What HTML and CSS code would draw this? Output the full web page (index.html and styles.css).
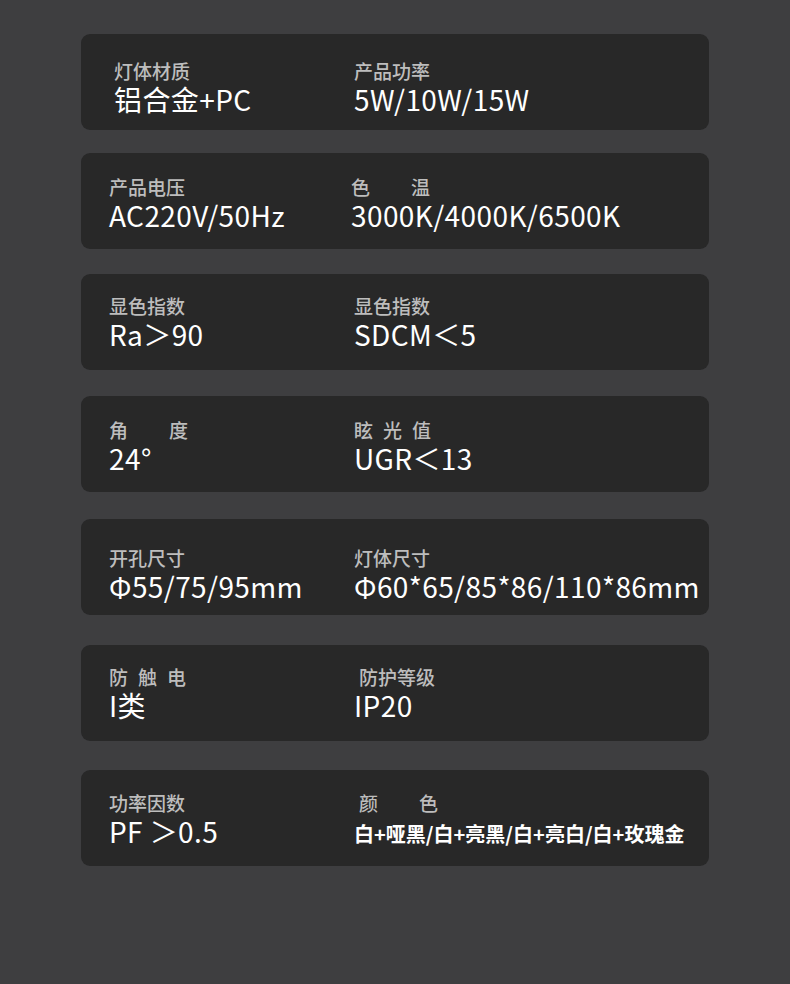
FILE: index.html
```html
<!DOCTYPE html>
<html lang="zh-CN">
<head>
  <meta charset="UTF-8">
  <meta name="viewport" content="width=device-width, initial-scale=1.0">
  <title>产品参数</title>
  <link rel="stylesheet" href="styles.css">
</head>
<body>
  <div class="specs">
    <div class="card">
      <div class="cell">
        <div class="label">灯体材质</div>
        <div class="value">铝合金+PC</div>
      </div>
      <div class="cell">
        <div class="label">产品功率</div>
        <div class="value">5W/10W/15W</div>
      </div>
    </div>

    <div class="card">
      <div class="cell">
        <div class="label">产品电压</div>
        <div class="value">AC220V/50Hz</div>
      </div>
      <div class="cell">
        <div class="label wide">色温</div>
        <div class="value">3000K/4000K/6500K</div>
      </div>
    </div>

    <div class="card">
      <div class="cell">
        <div class="label">显色指数</div>
        <div class="value">Ra＞90</div>
      </div>
      <div class="cell">
        <div class="label">显色指数</div>
        <div class="value">SDCM＜5</div>
      </div>
    </div>

    <div class="card">
      <div class="cell">
        <div class="label wide">角度</div>
        <div class="value">24°</div>
      </div>
      <div class="cell">
        <div class="label spaced">眩光值</div>
        <div class="value">UGR＜13</div>
      </div>
    </div>

    <div class="card">
      <div class="cell">
        <div class="label">开孔尺寸</div>
        <div class="value">Φ55/75/95mm</div>
      </div>
      <div class="cell">
        <div class="label">灯体尺寸</div>
        <div class="value">Φ60*65/85*86/110*86mm</div>
      </div>
    </div>

    <div class="card">
      <div class="cell">
        <div class="label spaced">防触电</div>
        <div class="value">I类</div>
      </div>
      <div class="cell">
        <div class="label">防护等级</div>
        <div class="value">IP20</div>
      </div>
    </div>

    <div class="card">
      <div class="cell">
        <div class="label">功率因数</div>
        <div class="value">PF ＞0.5</div>
      </div>
      <div class="cell">
        <div class="label wide">颜色</div>
        <div class="value small">白+哑黑/白+亮黑/白+亮白/白+玫瑰金</div>
      </div>
    </div>
  </div>
</body>
</html>
```

FILE: styles.css
```css
body {
  margin: 0;
  min-height: 984px;
  background-color: #3e3e40;
  font-family: "Noto Sans CJK SC", "Noto Sans", sans-serif;
  color: #ffffff;
}
.specs {
  width: 628px;
  margin: 0 auto;
  padding-top: 34px;
}
.card {
  display: grid;
  grid-template-columns: 270px 1fr;
  height: 96px;
  box-sizing: border-box;
  padding-top: 23px;
  margin-bottom: 26px;
  background-color: #282828;
  border-radius: 9px;
}
.cell:first-child {
  padding-left: 28px;
}
.cell:last-child {
  padding-left: 3px;
}
.label {
  font-size: 19px;
  line-height: 22px;
  font-weight: 500;
  color: #bdbdbd;
  white-space: nowrap;
}
.label.wide {
  letter-spacing: 41px;
}
.label.spaced {
  letter-spacing: 10px;
}
.value {
  margin-top: 1px;
  font-size: 28px;
  line-height: 32px;
  letter-spacing: 0.4px;
  white-space: nowrap;
}
.value.small {
  margin-top: 4px;
  font-size: 20px;
  font-weight: 700;
  letter-spacing: 0;
}

/* per-card nudges to follow the artwork */
.card:nth-child(1) {
  padding-top: 26px;
  margin-bottom: 23px;
}
.card:nth-child(1) .cell:first-child {
  padding-left: 33px;
}
.card:nth-child(2) {
  margin-bottom: 25px;
}
.card:nth-child(2) .cell:last-child {
  padding-left: 0;
}
.card:nth-child(3) {
  padding-top: 21px;
}
.card:nth-child(4) {
  margin-bottom: 27px;
}
.card:nth-child(5) {
  padding-top: 28px;
  margin-bottom: 30px;
}
.card:nth-child(6) {
  padding-top: 21px;
  margin-bottom: 29px;
}
.card:nth-child(6) .cell:last-child .label,
.card:nth-child(7) .cell:last-child .label {
  padding-left: 5px;
}
.card:nth-child(7) {
  padding-top: 22px;
}
```
